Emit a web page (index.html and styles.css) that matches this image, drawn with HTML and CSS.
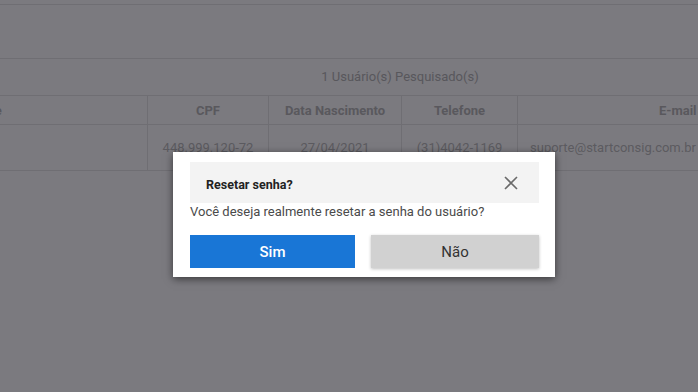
FILE: index.html
```html
<!DOCTYPE html>
<html lang="pt-BR">
<head>
<meta charset="utf-8">
<link rel="stylesheet" href="styles.css">
</head>
<body>
<div class="page">
  <div class="topbar"></div>
  <div class="filters"></div>
  <div class="result">1 Usuário(s) Pesquisado(s)</div>
  <table class="grid">
    <thead>
      <tr>
        <th class="c-nome">Nome</th>
        <th class="c-cpf">CPF</th>
        <th class="c-data">Data Nascimento</th>
        <th class="c-tel">Telefone</th>
        <th class="c-mail">E-mail</th>
      </tr>
    </thead>
    <tbody>
      <tr>
        <td></td>
        <td>448.999.120-72</td>
        <td>27/04/2021</td>
        <td>(31)4042-1169</td>
        <td class="mail">suporte@startconsig.com.br</td>
      </tr>
    </tbody>
  </table>
</div>

<div class="modal">
  <div class="modal-head">
    <span class="modal-title">Resetar senha?</span>
    <svg class="close" width="14" height="14" viewBox="0 0 14 14"><path d="M1 1L13 13M13 1L1 13" stroke="#6a6a6a" stroke-width="1.6" fill="none"/></svg>
  </div>
  <p class="modal-text">Você deseja realmente resetar a senha do usuário?</p>
  <div class="actions">
    <button class="btn btn-yes">Sim</button>
    <button class="btn btn-no">Não</button>
  </div>
</div>
</body>
</html>
```

FILE: styles.css
```css
html, body {
  margin: 0;
  padding: 0;
  background: #7b7a7f;
  overflow: hidden;
  width: 698px;
  height: 392px;
  font-family: Roboto, "Liberation Sans", sans-serif;
}

.page {
  width: 1156px;
  margin-left: -178px;
}

.topbar {
  height: 4px;
  border-bottom: 1px solid #6f6e73;
}

.filters {
  height: 53px;
  border-bottom: 1px solid #6f6e73;
}

.result {
  height: 36px;
  line-height: 36px;
  text-align: center;
  font-size: 13px;
  color: #58575c;
  border-bottom: 1px solid #6f6e73;
}

.grid {
  border-collapse: collapse;
  table-layout: fixed;
  width: 1156px;
}

.grid th, .grid td {
  border-right: 1px solid #6f6e73;
  border-bottom: 1px solid #6f6e73;
  text-align: center;
  font-size: 13px;
  padding: 0;
  white-space: nowrap;
  overflow: hidden;
}

.grid th {
  height: 28px;
  font-weight: 700;
  color: #59585d;
}

.grid td {
  height: 45px;
  color: #5c5b60;
  font-weight: 400;
}

.c-nome { width: 325px; }
.c-cpf { width: 120px; }
.c-data { width: 132px; }
.c-tel { width: 115px; }
.grid th.c-mail { text-align: left; padding-left: 141px; }
.grid td.mail { text-align: left; padding-left: 12px; }

.modal {
  position: absolute;
  left: 173px;
  top: 152px;
  width: 349px;
  padding: 10px 16px 9px 17px;
  background: #fff;
  box-shadow: 0 2px 8px rgba(0, 0, 0, 0.55);
}

.modal-head {
  height: 41px;
  background: #f3f3f3;
  display: flex;
  align-items: center;
  justify-content: space-between;
  padding: 0 21px 0 16px;
}

.modal-title {
  font-size: 12.5px;
  font-weight: 700;
  color: #222;
  padding-top: 3px;
}

.close {
  display: block;
}

.modal-text {
  margin: 0;
  font-size: 13px;
  line-height: 17px;
  color: #4a4a4a;
}

.actions {
  display: flex;
  gap: 16px;
  margin-top: 15px;
}

.btn {
  height: 33px;
  border: none;
  font-family: Roboto, "Liberation Sans", sans-serif;
  font-size: 15px;
  padding: 0;
}

.btn-yes {
  width: 165px;
  background: #1976d6;
  color: #fff;
  font-weight: 500;
}

.btn-no {
  width: 168px;
  background: #d1d1d1;
  color: #333;
  box-shadow: 0 1px 3px rgba(0, 0, 0, 0.25);
}
```
